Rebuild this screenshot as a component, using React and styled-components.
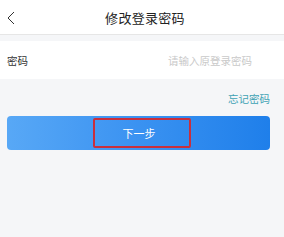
import React from 'react';
import styled, { createGlobalStyle } from 'styled-components';

const GlobalStyle = createGlobalStyle`
  html, body {
    margin: 0;
    padding: 0;
    background: #f5f6f8;
    font-family: "Noto Sans CJK SC", "Noto Sans", sans-serif;
  }
`;

const Page = styled.div`
  width: 284px;
  min-height: 237px;
  background: #f5f6f8;
`;

const Header = styled.div`
  height: 34px;
  background: #fff;
  border-bottom: 1px solid #e6e6e6;
  display: flex;
  align-items: center;
  justify-content: center;
  position: relative;
`;

const Back = styled.span`
  position: absolute;
  left: 6px;
  top: 11px;
  display: flex;
`;

const Title = styled.div`
  font-size: 13px;
  color: #222;
  letter-spacing: 0.3px;
  margin-left: 6px;
`;

const Row = styled.div`
  margin-top: 6px;
  height: 38px;
  background: #fff;
  display: flex;
  align-items: center;
  justify-content: space-between;
  padding: 0 32px 0 7px;
  font-size: 10.5px;
`;

const Label = styled.span`
  color: #333;
`;

const Placeholder = styled.span`
  color: #c9c9c9;
`;

const Links = styled.div`
  display: flex;
  justify-content: flex-end;
  padding: 12px 14px 0 7px;
  height: 26px;
  box-sizing: border-box;
`;

const Forgot = styled.span`
  font-size: 10.5px;
  color: #3ea2b4;
`;

const Actions = styled.div`
  padding: 11px 14px 0 7px;
`;

const NextButton = styled.div`
  height: 34px;
  border-radius: 4px;
  background: linear-gradient(90deg, #58a8f6 0%, #3a92f1 50%, #1f7fea 100%);
  display: flex;
  align-items: center;
  justify-content: center;
`;

const Marked = styled.span`
  box-sizing: border-box;
  width: 98px;
  height: 30px;
  border: 2.5px solid #c92f3c;
  border-radius: 2px;
  display: flex;
  align-items: center;
  justify-content: center;
  color: #fff;
  font-size: 11px;
  margin-left: 7px;
  padding-right: 6px;
`;

export default function App() {
  return (
    <Page>
      <GlobalStyle />
      <Header>
        <Back>
          <svg width="10" height="14" viewBox="0 0 10 14">
            <path d="M8 1 L2 7 L8 13" fill="none" stroke="#333" strokeWidth="1" />
          </svg>
        </Back>
        <Title>修改登录密码</Title>
      </Header>
      <Row>
        <Label>密码</Label>
        <Placeholder>请输入原登录密码</Placeholder>
      </Row>
      <Links>
        <Forgot>忘记密码</Forgot>
      </Links>
      <Actions>
        <NextButton>
          <Marked>下一步</Marked>
        </NextButton>
      </Actions>
    </Page>
  );
}
